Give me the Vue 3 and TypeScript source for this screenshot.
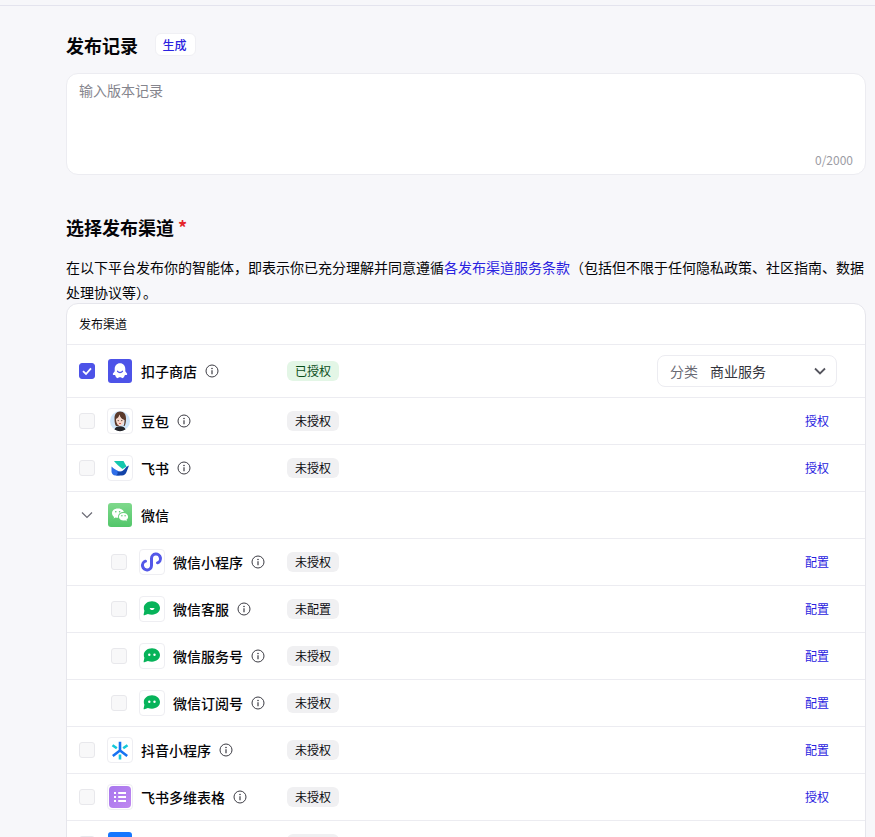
<script setup lang="ts">
interface Row {
  name: string
  icon: string
  tag?: string
  action?: string
  sub?: boolean
  checked?: boolean
  info?: boolean
  group?: boolean
  select?: boolean
  framed?: boolean
}

const rows: Row[] = [
  { name: '扣子商店', icon: 'coze', tag: '已授权', checked: true, info: true, select: true },
  { name: '豆包', icon: 'doubao', tag: '未授权', action: '授权', info: true, framed: true },
  { name: '飞书', icon: 'feishu', tag: '未授权', action: '授权', info: true, framed: true },
  { name: '微信', icon: 'wechat', group: true },
  { name: '微信小程序', icon: 'mini', tag: '未授权', action: '配置', sub: true, info: true, framed: true },
  { name: '微信客服', icon: 'kefu', tag: '未配置', action: '配置', sub: true, info: true, framed: true },
  { name: '微信服务号', icon: 'chat', tag: '未授权', action: '配置', sub: true, info: true, framed: true },
  { name: '微信订阅号', icon: 'chat', tag: '未授权', action: '配置', sub: true, info: true, framed: true },
  { name: '抖音小程序', icon: 'douyin', tag: '未授权', action: '配置', info: true, framed: true },
  { name: '飞书多维表格', icon: 'bitable', tag: '未授权', action: '授权', info: true, framed: true },
  { name: '', icon: 'blue', tag: '未授权', framed: false },
]
</script>

<template>
  <div class="page">
    <div class="topbar"></div>
    <main class="content">
      <div class="title-line">
        <h2 class="title">发布记录</h2>
        <button class="gen-btn" type="button">生成</button>
      </div>
      <div class="note-box">
        <span class="placeholder">输入版本记录</span>
        <span class="counter">0/2000</span>
      </div>

      <h2 class="title channel-title">选择发布渠道 <span class="required">*</span></h2>
      <p class="desc">在以下平台发布你的智能体，即表示你已充分理解并同意遵循<a class="link">各发布渠道服务条款</a>（包括但不限于任何隐私政策、社区指南、数据处理协议等）。</p>

      <section class="table">
        <div class="thead">发布渠道</div>
        <div
          v-for="row in rows"
          :key="row.name + row.icon"
          class="row"
          :class="{ tall: row.select }"
        >
          <div class="name-cell" :class="{ indented: row.sub }">
            <svg v-if="row.group" class="caret" viewBox="0 0 16 16" width="16" height="16">
              <path d="M3 5.500 8 10.500 13 5.500" fill="none" stroke="#6b6b75" stroke-width="1.200" />
            </svg>
            <span v-else class="check" :class="{ on: row.checked }">
              <svg v-if="row.checked" viewBox="0 0 16 16" width="16" height="16">
                <path d="M4 8.200 7 11 12 5.400" fill="none" stroke="#fff" stroke-width="1.800" />
              </svg>
            </span>

            <span class="logo" :class="{ framed: row.framed }">
              <svg v-if="row.icon === 'coze'" viewBox="0 0 24 24" width="24" height="24">
                <rect width="24" height="24" rx="3" fill="#4d53e8" />
                <path d="M12 4.300C8.700 4.300 6.700 6.800 6.700 10v2.300L5 14.600c-.5.800 0 1.500.8 1.500h1.300c.4 1.500 1.400 3.300 2.700 3 .8-.2 1.200-.8 2.200-.8s1.400.6 2.200.8c1.300.3 2.300-1.500 2.700-3h1.300c.8 0 1.300-.7.800-1.500l-1.700-2.300V10c0-3.200-2-5.700-5.300-5.700z" fill="#fff" />
                <path d="M9.600 12.300c1.200 1.600 3.600 1.600 4.800 0" fill="none" stroke="#4d53e8" stroke-width="1.400" stroke-linecap="round" />
              </svg>

              <svg v-else-if="row.icon === 'doubao'" viewBox="0 0 24 24" width="24" height="24">
                <circle cx="12" cy="12" r="10" fill="#cfe5fa" />
                <path d="M6.500 20.500c.6-2.300 2.800-3.300 5.500-3.300s4.900 1 5.500 3.300a10 10 0 0 1-11 0z" fill="#23242a" />
                <path d="M12 2.500C8.300 2.500 6.500 5.500 6.500 9.500c0 3.500.4 6 1.500 7.500h3V6c1 3 3 4.500 5.500 5 0 2.500-.3 4.500-1 6h1c1-1.500 1.500-4 1.500-7.500 0-4-1.800-7-6-7z" fill="#5a3a2c" />
                <path d="M11.500 5.500C10.800 8 9.500 9.300 8 10c0 3.800 1.700 6.800 4 6.800s4-3 4-5.800c-2.300-.6-3.800-2.600-4.500-5.500z" fill="#f8d9cc" />
                <circle cx="10.200" cy="11.600" r=".6" fill="#3a2a22" />
                <circle cx="13.800" cy="11.600" r=".6" fill="#3a2a22" />
                <path d="M11 14.500h2" stroke="#c9504f" stroke-width=".9" />
              </svg>

              <svg v-else-if="row.icon === 'feishu'" viewBox="0 0 24 24" width="24" height="24">
                <path d="M6 5h9.500l3 5.500-4 2.500C11 10.500 8 7.500 6 5z" fill="#14c7ae" />
                <path d="M3.500 10.500c3 2.800 6.500 5 9.500 5.300l-1.500 3.700H7.500c-2.300 0-4-1.700-4-4z" fill="#2f6ee8" />
                <path d="M9 15.500c4 .8 6.500-1 8.500-3.500 1-1.200 2-2 3.500-2.400l-2.500 6.400c-.8 2-2.300 3.500-4.500 3.500H8c1.500-.8 2.500-2.300 1-4z" fill="#1344a8" />
              </svg>

              <svg v-else-if="row.icon === 'wechat'" viewBox="0 0 24 24" width="24" height="24">
                <defs>
                  <linearGradient id="wxBg" x1="0" y1="0" x2="0" y2="1">
                    <stop offset="0" stop-color="#7fd98c" />
                    <stop offset="1" stop-color="#52c66a" />
                  </linearGradient>
                </defs>
                <rect width="24" height="24" rx="3" fill="url(#wxBg)" />
                <path d="M9.800 5.500c-3.200 0-5.800 2.100-5.800 4.700 0 1.500.8 2.800 2.100 3.700l-.5 1.600 1.900-1c.7.200 1.500.3 2.300.3h.5a4 4 0 0 1-.2-1.200c0-2.600 2.400-4.600 5.400-4.600h.4c-.6-2-2.900-3.500-5.600-3.500z" fill="#fff" />
                <path d="M15.500 10c-2.500 0-4.600 1.700-4.600 3.800s2.100 3.800 4.600 3.800c.6 0 1.200-.1 1.700-.3l1.600.9-.4-1.400c1.100-.7 1.700-1.800 1.700-3 0-2.100-2.100-3.800-4.600-3.800z" fill="#fff" />
                <circle cx="7.800" cy="8.800" r=".8" fill="#58c76f" />
                <circle cx="11.600" cy="8.800" r=".8" fill="#58c76f" />
                <circle cx="13.900" cy="12.800" r=".7" fill="#58c76f" />
                <circle cx="17.100" cy="12.800" r=".7" fill="#58c76f" />
              </svg>

              <svg v-else-if="row.icon === 'mini'" viewBox="0 0 24 24" width="24" height="24">
                <path d="M5.500 11.200A4.500 4.500 0 1 0 11.500 15.500V8.500A4.500 4.500 0 1 1 17.500 12.800" fill="none" stroke="#5458e8" stroke-width="3" stroke-linecap="round" />
              </svg>

              <svg v-else-if="row.icon === 'kefu'" viewBox="0 0 24 24" width="24" height="24">
                <path d="M12 4.300c-4.500 0-8.200 2.800-8.200 6.800 0 1 .2 1.900.6 2.700l-.8 3.900c-.1.500.3.800.8.600l3.500-1.400c1.200.5 2.600.8 4.100.8 4.500 0 8-2.800 8-6.600s-3.500-6.800-8-6.800z" fill="#07b35a" />
                <path d="M9.700 11h4.800c-.3 1.500-1.200 2.100-2.400 2.100s-2.100-.6-2.400-2.100z" fill="#fff" />
              </svg>

              <svg v-else-if="row.icon === 'chat'" viewBox="0 0 24 24" width="24" height="24">
                <path d="M12 4.300c-4.500 0-8.200 2.800-8.200 6.800 0 1 .2 1.900.6 2.700l-.8 3.900c-.1.500.3.800.8.600l3.500-1.400c1.200.5 2.600.8 4.100.8 4.500 0 8-2.800 8-6.600s-3.500-6.800-8-6.800z" fill="#07b35a" />
                <circle cx="9.300" cy="10.700" r="1.200" fill="#fff" />
                <circle cx="14.500" cy="10.700" r="1.200" fill="#fff" />
              </svg>

              <svg v-else-if="row.icon === 'douyin'" viewBox="0 0 24 24" width="24" height="24">
                <path d="M12 3.800v8.700M12 12.500 4.800 18M12 12.500l7.200 5.500" fill="none" stroke="#1673f2" stroke-width="2.600" />
                <path d="M4.500 7.200 8.800 10.200M19.500 7.200 15.200 10.200M12 16.500v5" fill="none" stroke="#14c8d8" stroke-width="2.600" />
              </svg>

              <svg v-else-if="row.icon === 'bitable'" viewBox="0 0 24 24" width="24" height="24">
                <defs>
                  <linearGradient id="bitBg" x1="0" y1="0" x2="1" y2="1">
                    <stop offset="0" stop-color="#a877ee" />
                    <stop offset="1" stop-color="#bf88f0" />
                  </linearGradient>
                </defs>
                <rect x="1" y="1" width="22" height="22" rx="4" fill="url(#bitBg)" />
                <path d="M6 7h2v2H6zM6 11h2v2H6zM6 15h2v2H6zM10.200 7H18v2h-7.800zM10.200 11H18v2h-7.800zM10.200 15H18v2h-7.800z" fill="#fff" />
              </svg>

              <svg v-else-if="row.icon === 'blue'" viewBox="0 0 24 24" width="24" height="24">
                <rect width="24" height="24" rx="3" fill="#1677ff" />
              </svg>
            </span>

            <span class="name">{{ row.name }}</span>
            <svg v-if="row.info" class="info" viewBox="0 0 14 14" width="14" height="14">
              <circle cx="7" cy="7" r="6" fill="none" stroke="#3c3c44" stroke-width="1" />
              <circle cx="7" cy="4.500" r=".8" fill="#3c3c44" />
              <path d="M7 6.300v4" stroke="#3c3c44" stroke-width="1.200" />
            </svg>
          </div>

          <span v-if="row.tag" class="tag" :class="{ ok: row.checked }">{{ row.tag }}</span>

          <div v-if="row.select" class="select">
            <span class="select-label">分类</span>
            <span class="select-value">商业服务</span>
            <svg class="select-arrow" viewBox="0 0 16 16" width="16" height="16">
              <path d="M3 5.500 8 10.500 13 5.500" fill="none" stroke="#55555e" stroke-width="1.800" />
            </svg>
          </div>
          <a v-else-if="row.action" class="action">{{ row.action }}</a>
        </div>
      </section>
    </main>
  </div>
</template>

<style>
html,
body {
  margin: 0;
  background: #f7f7fa;
}
</style>

<style scoped>
.page {
  height: 837px;
  overflow: hidden;
  background: #f7f7fa;
  color: #050508;
  font-family: "Noto Sans CJK SC", "Noto Sans", sans-serif;
}
.topbar {
  height: 5px;
  border-bottom: 1px solid #e4e4ee;
}
.content {
  padding: 0 9px 0 66px;
}
.title-line {
  display: flex;
  align-items: center;
  gap: 17px;
  height: 67px;
  padding-top: 10px;
  box-sizing: border-box;
}
.title {
  margin: 0;
  font-size: 18px;
  line-height: 26px;
  font-weight: 600;
}
.gen-btn {
  width: 41px;
  height: 23px;
  padding: 0;
  border: 1px solid #f0f0f4;
  border-radius: 6px;
  background: #fff;
  color: #2a22e0;
  font: 500 12px/20px "Noto Sans CJK SC", sans-serif;
  text-indent: -2px;
}
.note-box {
  position: relative;
  height: 102px;
  box-sizing: border-box;
  padding: 6px 12px;
  background: #fff;
  border: 1px solid #ececf1;
  border-radius: 12px;
}
.placeholder {
  display: block;
  font-size: 14px;
  line-height: 20px;
  color: #85858d;
}
.counter {
  position: absolute;
  right: 12px;
  bottom: 5px;
  font-size: 12px;
  line-height: 18px;
  color: #9c9ca4;
}
.channel-title {
  margin-top: 39px;
}
.required {
  color: #e5252a;
}
.desc {
  margin: 15px 0 0;
  font-size: 14px;
  line-height: 25px;
  letter-spacing: 0;
}
.link {
  color: #2a22e0;
}
.table {
  margin-top: -2px;
  background: #fff;
  border: 1px solid #e6e6ec;
  border-radius: 12px 12px 0 0;
}
.thead {
  height: 41px;
  box-sizing: border-box;
  padding: 0 12px;
  font-size: 12px;
  line-height: 39px;
  color: #0b0b0f;
  border-bottom: 1px solid #ececf1;
}
.row {
  display: flex;
  align-items: center;
  height: 47px;
  padding-right: 36px;
  box-sizing: border-box;
  border-bottom: 1px solid #ececf1;
}
.row.tall {
  height: 53px;
  padding-right: 28px;
}
.name-cell {
  display: flex;
  align-items: center;
  width: 220px;
  flex: none;
  padding-left: 12px;
  box-sizing: border-box;
}
.name-cell.indented {
  padding-left: 44px;
}
.check {
  width: 16px;
  height: 16px;
  box-sizing: border-box;
  flex: none;
  border: 1px solid #e8e8ec;
  border-radius: 3px;
  background: #f8f8f9;
}
.check.on {
  border-color: #4d53e8;
  background: #4d53e8;
}
.check svg {
  display: block;
  margin: -1px;
}
.caret {
  flex: none;
}
.logo {
  width: 24px;
  height: 24px;
  margin: 0 9px 0 13px;
  flex: none;
  box-sizing: content-box;
}
.logo.framed {
  border: 1px solid #eeeef2;
  border-radius: 4px;
  margin: -1px 8px -1px 12px;
  overflow: hidden;
}
.logo svg {
  display: block;
}
.name {
  font-size: 14px;
  line-height: 20px;
  font-weight: 500;
  white-space: nowrap;
}
.info {
  flex: none;
  margin-left: 8px;
}
.tag {
  width: 52px;
  height: 20px;
  flex: none;
  border-radius: 6px;
  background: #f0f0f2;
  color: #0b0b0f;
  font-size: 12px;
  line-height: 20px;
  text-align: center;
}
.tag.ok {
  background: #e3f6e6;
  color: #0a4d1a;
}
.action {
  margin-left: auto;
  color: #2a22e0;
  font-size: 12px;
  line-height: 18px;
}
.select {
  display: flex;
  align-items: center;
  width: 180px;
  height: 32px;
  margin-left: auto;
  box-sizing: border-box;
  padding: 0 8px 0 12px;
  border: 1px solid #ececf1;
  border-radius: 8px;
  font-size: 14px;
  line-height: 30px;
}
.select-label {
  color: #6b6b75;
  margin-right: 12px;
}
.select-value {
  color: #33333b;
}
.select-arrow {
  margin-left: auto;
}
</style>
